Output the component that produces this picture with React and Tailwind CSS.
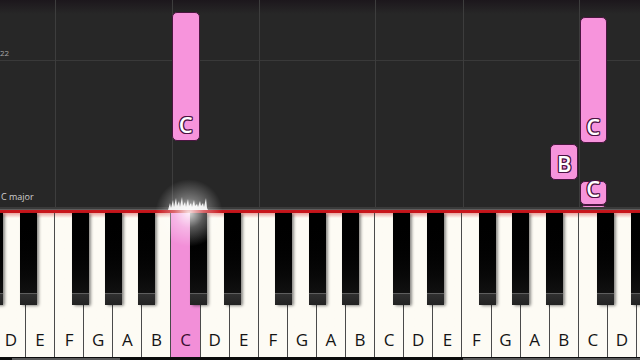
import React from "react";

const W = 29.1;
const O = -3.1;
const NAMES = ["D", "E", "F", "G", "A", "B", "C"];
const keyX = (i) => O + i * W;

const BLACK_OFFSETS = { 0: -2.5, 1: 2.5, 3: -4, 4: 0, 5: 4.5 };

const blackKeys = [];
for (let i = 0; i < 23; i++) {
  const p = i % 7;
  if (BLACK_OFFSETS[p] !== undefined) {
    blackKeys.push({ i, left: keyX(i) + BLACK_OFFSETS[p] - 8.5 });
  }
}

const gridLines = [2, 6, 9, 13, 16, 20];

const notes = [
  { i: 6, top: 12, h: 129, label: "C" },
  { i: 20, top: 17, h: 126, label: "C" },
  { i: 19, top: 144, h: 36, label: "B" },
  { i: 20, top: 181, h: 24, label: "C" },
  { i: 20, top: 205, h: 60, label: "" },
];

function Note({ i, top, h, label }) {
  return (
    <div
      className="absolute flex items-end justify-center rounded-[5px] border border-[#4a1440] bg-[#f794dc] pb-[4px]"
      style={{ left: keyX(i) + 0.6, top, width: W - 1.6, height: h }}
    >
      {label && (
        <span className="font-['Open_Sans',sans-serif] text-[22px] font-semibold leading-[24px] text-white [text-shadow:1px_0_#4a1140,-1px_0_#4a1140,0_1px_#4a1140,0_-1px_#4a1140,1px_1px_#4a1140,-1px_-1px_#4a1140,1px_-1px_#4a1140,-1px_1px_#4a1140]">
          {label}
        </span>
      )}
      {!label && (
        <div className="absolute left-[7px] top-[1px] h-[4px] w-[12px] rounded-t-full border-x-[2px] border-t-[2px] border-[#fff3fb]" />
      )}
    </div>
  );
}

export default function App() {
  return (
    <div className="relative flex h-[360px] w-[640px] flex-col overflow-hidden bg-[#111] font-['Open_Sans',sans-serif]">
      {/* Roll */}
      <div className="relative h-[209px] shrink-0 overflow-hidden bg-[#272727]">
        <div className="absolute inset-x-0 top-0 h-[14px] bg-gradient-to-b from-[#1c171c] to-[#272727]" />
        <div className="absolute inset-x-0 top-[60px] h-px bg-[#393939]" />
        {gridLines.map((i) => (
          <div
            key={i}
            className="absolute inset-y-0 w-px bg-[#3d3d3d]"
            style={{ left: Math.round(keyX(i)) }}
          />
        ))}
        <div className="absolute left-0 top-[48px] text-[8px] leading-[10px] text-[#a8a8a8]">22</div>
        <div className="absolute left-[1px] top-[191px] text-[9px] leading-[12px] text-[#cfcfcf]">C major</div>
        {notes.map((n, k) => (
          <Note key={k} {...n} />
        ))}
        <div className="absolute inset-x-0 bottom-0 h-[2px] bg-[#3a3a3a]" />
      </div>
      <div className="h-px shrink-0 bg-[#5e5e5e]" />
      <div className="h-[3px] shrink-0 bg-[#c8161c]" />

      {/* Keyboard */}
      <div className="relative h-[144px] shrink-0">
        <div className="ml-[-3.1px] flex h-full">
          {Array.from({ length: 23 }).map((_, i) => {
            const active = i === 6;
            return (
              <div
                key={i}
                className={
                  "flex h-full w-[29.1px] shrink-0 items-end justify-center border-r border-[#4a4a4a] pb-[7px] " +
                  (active
                    ? "bg-[#f28fd8] text-[#3a1030]"
                    : "bg-gradient-to-b from-[#e8a6a2] from-[0px] to-[#fdfbf4] to-[5px] text-[#141414]")
                }
              >
                {i < 22 && <span className="text-[17px] leading-[20px]">{NAMES[i % 7]}</span>}
              </div>
            );
          })}
        </div>
        {blackKeys.map((b) => (
          <div
            key={b.i}
            className="absolute top-0 flex h-[92px] w-[17px] flex-col justify-end rounded-b-[2px] bg-gradient-to-b from-[#000] to-[#161616] shadow-[2px_1px_3px_rgba(0,0,0,0.45)]"
            style={{ left: b.left }}
          >
            <div className="h-[12px] border-t border-[#5e5e5e] bg-gradient-to-b from-[#303030] to-[#222]" />
          </div>
        ))}
      </div>
      <div className="flex h-[3px] shrink-0 items-end bg-[#0c0c0c]">
        <div className="ml-[12px] h-[2px] w-[108px] bg-[#5a5a5a]" />
        <div className="ml-auto h-[2px] w-[177px] bg-[#5a5a5a]" />
      </div>

      {/* Glow over the pressed key */}
      <div className="pointer-events-none absolute left-[154px] top-[178px] h-[70px] w-[70px] bg-[radial-gradient(ellipse_at_center,rgba(255,255,255,0.85)_0%,rgba(255,255,255,0.35)_30%,rgba(255,255,255,0)_68%)]" />
      <svg
        className="pointer-events-none absolute left-[168px] top-[194px]"
        width="40"
        height="16"
        viewBox="0 0 40 16"
      >
        <path
          d="M0 16 L2 9 L3 14 L5 6 L6 13 L8 4 L9 12 L11 7 L12 13 L14 3 L15 12 L17 8 L18 13 L20 5 L21 12 L23 9 L24 13 L26 6 L27 12 L29 10 L30 13 L32 7 L33 12 L35 9 L36 13 L38 4 L39 14 L40 16 Z"
          fill="#ffffff"
          opacity="0.9"
        />
      </svg>
    </div>
  );
}
